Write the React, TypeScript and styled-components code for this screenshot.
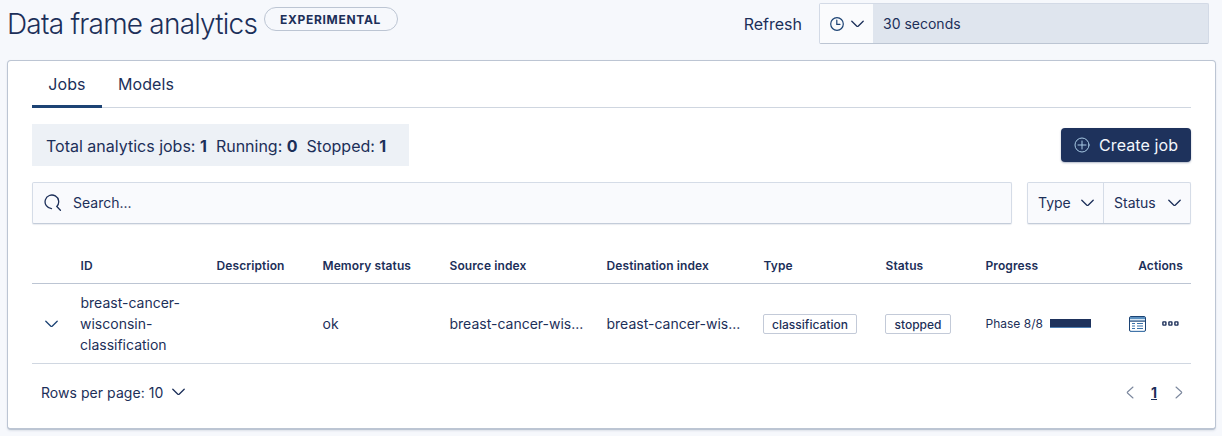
import React from "react";
import styled, { createGlobalStyle, css } from "styled-components";

const ink = "#1c2f59";
const line = "#bcc5d3";

const GlobalStyle = createGlobalStyle`
  * { box-sizing: border-box; }
  html, body { margin: 0; background: #f6f8fc; }
  body {
    height: 436px;
    overflow: hidden;
    color: ${ink};
    font-family: Inter, "Liberation Sans", sans-serif;
    font-size: 14px;
    line-height: 21px;
  }
  button { font: inherit; color: inherit; border: 0; padding: 0; margin: 0; background: none; }
  svg { display: block; flex: none; }
`;

const Page = styled.div`
  display: flex;
  flex-direction: column;
  padding: 0 6px 0 7px;
`;

const Header = styled.header`
  display: flex;
  align-items: flex-start;
  height: 60px;
`;

const Title = styled.h1`
  margin: 7px 0 0;
  width: 257px;
  font-size: 28px;
  font-weight: 300;
  line-height: 34px;
  letter-spacing: -0.78px;
  white-space: nowrap;
`;

const BetaBadge = styled.span`
  display: flex;
  align-items: center;
  justify-content: center;
  width: 134px;
  height: 24px;
  margin-top: 7px;
  padding-right: 1px;
  border: 1px solid ${line};
  border-radius: 12px;
  font-size: 12px;
  font-weight: 700;
  letter-spacing: 0.7px;
`;

const RefreshButton = styled.button`
  margin: 13px 17px 0 auto;
  font-size: 16px;
  line-height: 22px;
`;

const IntervalControl = styled.div`
  display: flex;
  width: 390px;
  height: 41px;
  margin: 3px 7px 0 0;
  border: 1px solid #d3dae6;
  border-bottom-color: ${line};
  border-radius: 2px;
  background: #dfe5ee;
  font-size: 14px;
`;

const IntervalButton = styled.button`
  display: flex;
  align-items: center;
  gap: 7px;
  width: 53px;
  padding-left: 10px;
  background: #fafbfd;
`;

const IntervalValue = styled.span`
  padding-left: 10px;
  line-height: 39px;
`;

const Panel = styled.main`
  height: 370px;
  padding: 0 24px;
  background: #fff;
  border: 1px solid ${line};
  border-bottom-width: 2px;
  border-radius: 4px;
  box-shadow: 0 1px 2px rgba(150, 163, 185, 0.25);
`;

const Tabs = styled.nav`
  display: flex;
  height: 47px;
  border-bottom: 1px solid #cfd6e0;
`;

const Tab = styled.button<{ $active?: boolean }>`
  height: 47px;
  padding: 0 16px 1px;
  font-size: 16px;
  letter-spacing: 0.08px;
  ${(p) =>
    p.$active &&
    css`
      width: 70px;
      border-bottom: 3px solid #1c4374;
      padding-top: 3px;
    `}
`;

const Summary = styled.div`
  display: flex;
  justify-content: space-between;
  align-items: center;
  margin-top: 16px;
  height: 42px;
`;

const Stats = styled.div`
  display: flex;
  align-items: center;
  gap: 9px;
  width: 377px;
  height: 42px;
  padding: 3px 0 0 14px;
  background: #edf1f6;
  font-size: 16px;
  white-space: nowrap;
`;

const CreateButton = styled.button`
  display: flex;
  align-items: center;
  gap: 9px;
  width: 130px;
  height: 34px;
  padding-left: 13px;
  border-radius: 4px;
  background: #1e325c;
  color: #f3f7fc;
  font-size: 16px;
  letter-spacing: 0.1px;
  white-space: nowrap;
  box-shadow: 0 1px 2px rgba(30, 50, 92, 0.35);
`;

const SearchRow = styled.div`
  display: flex;
  gap: 15px;
  margin-top: 16px;
`;

const fieldBox = css`
  height: 42px;
  border: 1px solid #d5dce7;
  border-bottom-color: #c3ccd9;
  background: #f9fafd;
  border-radius: 2px;
  box-shadow: 0 1px 1px rgba(150, 163, 185, 0.2);
`;

const SearchField = styled.div`
  ${fieldBox}
  flex: 1;
  display: flex;
  align-items: center;
  gap: 11px;
  padding: 0 0 1px 11px;
`;

const Filters = styled.div`
  ${fieldBox}
  display: flex;
  width: 164px;
`;

const FilterButton = styled.button<{ $width: number }>`
  display: flex;
  align-items: center;
  justify-content: space-between;
  width: ${(p) => p.$width}px;
  padding: 0 9px 1px 10px;
  & + & { border-left: 1px solid #d5dce7; }
`;

const Row = styled.div<{ $head?: boolean }>`
  display: grid;
  grid-template-columns: 48px 136px 106px 127px 157px 157px 122px 100px 106px 1fr;
  align-items: center;
  padding-right: 8px;
  height: 80px;
  border-bottom: 1px solid #d0d7e1;
  ${(p) =>
    p.$head &&
    css`
      height: 36px;
      margin-top: 24px;
      border-bottom-color: ${line};
      font-size: 12px;
      font-weight: 600;
      letter-spacing: 0.1px;
    `}
`;

const Cell = styled.div<{ $end?: boolean }>`
  display: flex;
  align-items: center;
  justify-content: ${(p) => (p.$end ? "flex-end" : "flex-start")};
  white-space: nowrap;
`;

const JobId = styled.div`
  width: 108px;
`;

const Name = styled.span`
  padding-left: 0.5px;
`;

const Tag = styled.span<{ $width: number }>`
  width: ${(p) => p.$width}px;
  height: 20px;
  border: 1px solid #c3cad8;
  border-radius: 2px;
  font-size: 12px;
  font-weight: 500;
  line-height: 19px;
  text-align: center;
`;

const Phase = styled.span`
  width: 65px;
  padding-left: 0.5px;
  font-size: 12px;
`;

const Bar = styled.span`
  width: 41px;
  height: 9px;
  background: #1e325c;
  border-bottom: 1px solid #4d7db0;
`;

const ActionIcons = styled.div`
  display: flex;
  align-items: center;
  gap: 16px;
  padding-right: 4px;
`;

const Toggle = styled.span`
  padding-left: 13px;
`;

const Footer = styled.footer`
  display: flex;
  justify-content: space-between;
  align-items: center;
  height: 56px;
  padding: 0 8px 0 9px;
`;

const PageSize = styled.button`
  display: flex;
  align-items: center;
  gap: 9px;
  letter-spacing: 0.05px;
`;

const Pager = styled.div`
  display: flex;
  align-items: center;
  gap: 17px;
`;

const CurrentPage = styled.span`
  width: 7px;
  font-weight: 700;
  text-decoration: underline;
`;

const Chevron = ({ color = ink }: { color?: string }) => (
  <svg width="13" height="8" viewBox="0 0 13 8" fill="none" stroke={color} strokeWidth="1.3" strokeLinecap="round" strokeLinejoin="round">
    <path d="M.8 1.2 5.6 6Q6.5 6.8 7.4 6L12.2 1.2" />
  </svg>
);

const PageArrow = ({ next }: { next?: boolean }) => (
  <svg width="8" height="13" viewBox="0 0 8 13" fill="none" stroke="#7b879d" strokeWidth="1.1" strokeLinecap="round" strokeLinejoin="round">
    <path d={next ? "M1 1 6.5 6 Q7 6.5 6.5 7L1 12" : "M7 1 1.5 6Q1 6.5 1.5 7L7 12"} />
  </svg>
);

const ClockIcon = () => (
  <svg width="14" height="14" viewBox="0 0 14 14" fill="none" stroke="#1c4374" strokeWidth="1.2" strokeLinecap="round">
    <circle cx="7" cy="7" r="6.3" />
    <path d="M6.8 3.2V7.3H10" />
  </svg>
);

const SearchIcon = () => (
  <svg width="18" height="18" viewBox="0 0 18 18" fill="none" stroke={ink} strokeWidth="1.3" strokeLinecap="round">
    <path d="M7.5 14.6A6.8 6.8 0 1 1 12.8 12.5L16.4 16.2" />
  </svg>
);

const PlusIcon = () => (
  <svg width="16" height="16" viewBox="0 0 16 16" fill="none" stroke="#a9cbe6" strokeWidth="1" strokeLinecap="round">
    <circle cx="8" cy="8" r="7" />
    <path d="M8 4V12M4 8H12" />
  </svg>
);

const TableIcon = () => (
  <svg width="17" height="16" viewBox="0 0 17 16" fill="none">
    <rect x=".5" y=".5" width="16" height="15" rx="1.5" fill="#fff" stroke="#1c4374" />
    <path d="M1 1H16V4.5H1Z" fill="#5b90c0" />
    <path d="M1 3.5H16" stroke="#d9e7f3" />
    <path d="M1 5.2H16" stroke="#1c4374" />
    <path d="M3 7.5H6M8 7.5H14M3 10H6M8 10H14M3 12.5H6M8 12.5H14" stroke="#3c73aa" strokeWidth="1.2" />
    <path d="M1 15.3H16" stroke="#4d83b7" />
  </svg>
);

const MoreIcon = () => (
  <svg width="17" height="5" viewBox="0 0 17 5" fill="#fff" stroke={ink} strokeWidth="1.4">
    <rect x=".9" y=".9" width="3" height="3.2" rx=".4" />
    <rect x="6.9" y=".9" width="3" height="3.2" rx=".4" />
    <rect x="12.9" y=".9" width="3" height="3.2" rx=".4" />
  </svg>
);

const columns = ["ID", "Description", "Memory status", "Source index", "Destination index", "Type", "Status", "Progress"];

export default function App() {
  return (
    <Page>
      <GlobalStyle />
      <Header>
        <Title>Data frame analytics</Title>
        <BetaBadge>EXPERIMENTAL</BetaBadge>
        <RefreshButton>Refresh</RefreshButton>
        <IntervalControl>
          <IntervalButton><ClockIcon /><Chevron /></IntervalButton>
          <IntervalValue>30 seconds</IntervalValue>
        </IntervalControl>
      </Header>
      <Panel>
        <Tabs>
          <Tab $active>Jobs</Tab>
          <Tab>Models</Tab>
        </Tabs>
        <Summary>
          <Stats>
            <span>Total analytics jobs: <b>1</b></span>
            <span>Running: <b>0</b></span>
            <span>Stopped: <b>1</b></span>
          </Stats>
          <CreateButton><PlusIcon />Create job</CreateButton>
        </Summary>
        <SearchRow>
          <SearchField><SearchIcon />Search...</SearchField>
          <Filters>
            <FilterButton $width={75}>Type<Chevron /></FilterButton>
            <FilterButton $width={87}>Status<Chevron /></FilterButton>
          </Filters>
        </SearchRow>
        <Row $head>
          <Cell />
          {columns.map((name) => <Cell key={name}><Name>{name}</Name></Cell>)}
          <Cell $end>Actions</Cell>
        </Row>
        <Row>
          <Cell><Toggle><Chevron color="#1c4374" /></Toggle></Cell>
          <JobId><Name>breast-cancer-wisconsin-classification</Name></JobId>
          <Cell />
          <Cell><Name>ok</Name></Cell>
          <Cell><Name>breast-cancer-wis...</Name></Cell>
          <Cell><Name>breast-cancer-wis...</Name></Cell>
          <Cell><Tag $width={94}>classification</Tag></Cell>
          <Cell><Tag $width={66}>stopped</Tag></Cell>
          <Cell><Phase>Phase 8/8</Phase><Bar /></Cell>
          <Cell $end><ActionIcons><TableIcon /><MoreIcon /></ActionIcons></Cell>
        </Row>
        <Footer>
          <PageSize>Rows per page: 10<Chevron /></PageSize>
          <Pager><PageArrow /><CurrentPage>1</CurrentPage><PageArrow next /></Pager>
        </Footer>
      </Panel>
    </Page>
  );
}
